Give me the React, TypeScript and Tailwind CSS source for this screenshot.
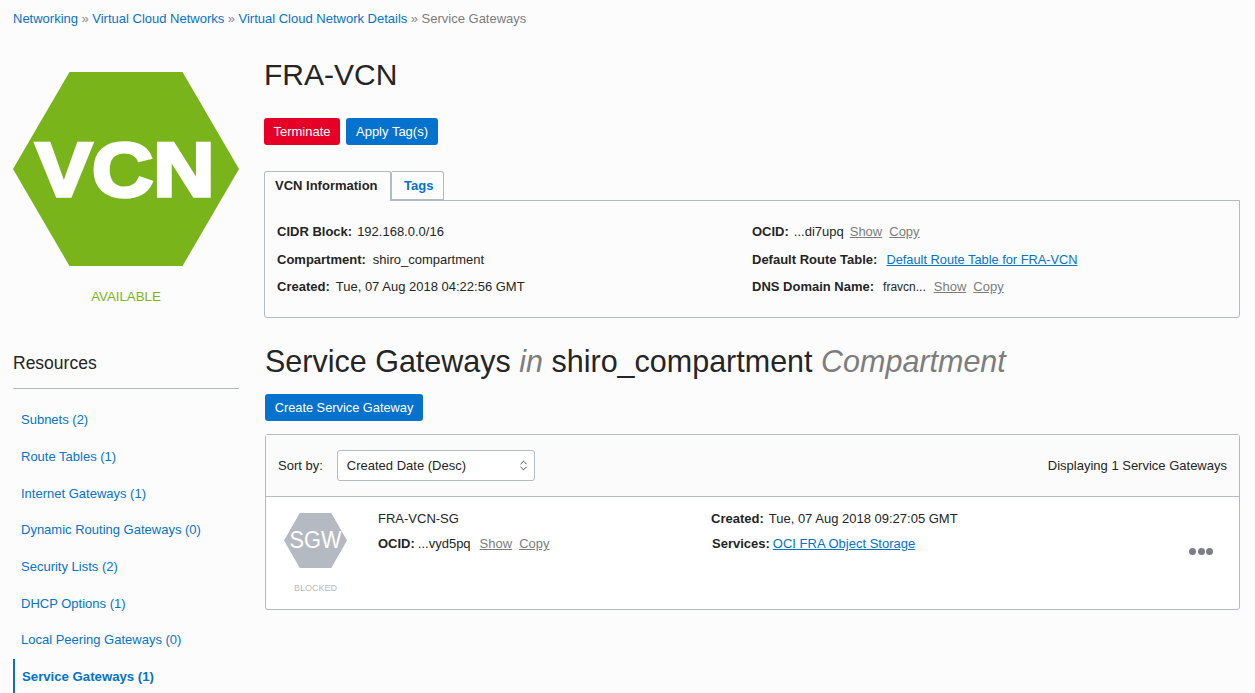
import { ChevronsUpDown } from "lucide-react";

const resources = [
  "Subnets (2)",
  "Route Tables (1)",
  "Internet Gateways (1)",
  "Dynamic Routing Gateways (0)",
  "Security Lists (2)",
  "DHCP Options (1)",
  "Local Peering Gateways (0)",
];

function Crumb({ children }: { children: React.ReactNode }) {
  return <a className="text-[#0572ce]">{children}</a>;
}

function Sep() {
  return <span className="px-[3.5px] text-[#8a8a8a]">»</span>;
}

function Hexagon({
  text,
  w,
  h,
  fill,
  size,
  x,
  y,
  tl,
  heavy,
}: {
  text: string;
  w: number;
  h: number;
  fill: string;
  size: number;
  x: number;
  y: number;
  tl: number;
  heavy?: boolean;
}) {
  return (
    <svg width={w} height={h} viewBox={`0 0 ${w} ${h}`} className="block">
      <polygon points={`${w / 4},0 ${(w * 3) / 4},0 ${w},${h / 2} ${(w * 3) / 4},${h} ${w / 4},${h} 0,${h / 2}`} fill={fill} />
      <text
        x={x}
        y={y}
        textAnchor="middle"
        fill="#fff"
        fontSize={size}
        fontWeight={heavy ? "bold" : "normal"}
        stroke={heavy ? "#fff" : "none"}
        strokeWidth={heavy ? 3.5 : 0}
        textLength={tl}
        lengthAdjust="spacingAndGlyphs"
      >
        {text}
      </text>
    </svg>
  );
}

function Actions({ gap }: { gap: string }) {
  return (
    <>
      <a className={`${gap} text-[#7d7d7d] underline`}>Show</a>
      <a className="ml-[7px] text-[#7d7d7d] underline">Copy</a>
    </>
  );
}

export default function App() {
  return (
    <div className="h-[693px] w-[1255px] overflow-hidden bg-[#fcfcfc] font-['Liberation_Sans',Arial,sans-serif] text-[13px] leading-[18px] text-[#252525]">
      <div className="pl-[13px] pt-[10px]">
        <Crumb>Networking</Crumb>
        <Sep />
        <Crumb>Virtual Cloud Networks</Crumb>
        <Sep />
        <Crumb>Virtual Cloud Network Details</Crumb>
        <Sep />
        <span className="text-[#7d7d7d]">Service Gateways</span>
      </div>

      <div className="flex pl-[13px] pr-[15px] pt-[25px]">
        {/* left column */}
        <aside className="w-[226px] shrink-0">
          <div className="pt-[19px]">
            <Hexagon text="VCN" w={226} h={194} fill="#78b41a" size={76} x={112} y={123.5} tl={179} heavy />
          </div>
          <div className="mt-[22px] text-center text-[13.3px] leading-[18px] text-[#7cb518]">AVAILABLE</div>
          <h2 className="mt-[46px] border-b border-[#b5b9c1] pb-[14px] text-[17.5px] leading-[22px]">Resources</h2>
          <ul className="mt-[13px]">
            {resources.map((r) => (
              <li key={r} className="h-[36.7px] pl-[8px] pt-[9.15px] text-[#0572ce]">
                {r}
              </li>
            ))}
            <li className="h-[37px] border-l-2 border-[#0572ce] pl-[7px] pt-[9.35px] text-[13.2px] font-bold text-[#0572ce]">
              Service Gateways (1)
            </li>
          </ul>
        </aside>

        {/* main column */}
        <main className="ml-[25px] min-w-0 flex-1">
          <h1 className="pt-[4px] text-[30px] leading-[36px]">FRA-VCN</h1>
          <div className="mt-[25px] flex gap-[6px]">
            <button className="h-[27px] w-[76px] rounded-[3px] bg-[#e60026] text-[13px] text-white">Terminate</button>
            <button className="h-[27px] w-[92px] rounded-[3px] bg-[#0572ce] text-[13px] text-white">Apply Tag(s)</button>
          </div>

          <div className="relative z-10 mt-[26px] flex h-[30px] items-stretch">
            <div className="h-[30px] w-[128px] rounded-t-[3px] border border-r-2 border-b-0 border-[#b5b9c1] bg-[#fcfcfc] pl-[10px] pt-[5px] text-[13px] font-bold">
              VCN Information
            </div>
            <div className="h-[29px] w-[52px] rounded-tr-[3px] border border-l-0 border-[#b5b9c1] pl-[12px] pt-[5px] font-bold text-[#0572ce]">
              Tags
            </div>
          </div>
          <div className="-mt-px grid h-[118px] grid-cols-[475px_1fr] rounded-b-[3px] border border-[#b5b9c1] pl-[12px] pt-[22px]">
            <div className="flex flex-col gap-[9.5px]">
              <div>
                <b>CIDR Block:</b>
                <span className="ml-[5px]">192.168.0.0/16</span>
              </div>
              <div>
                <b>Compartment:</b>
                <span className="ml-[7px]">shiro_compartment</span>
              </div>
              <div>
                <b>Created:</b>
                <span className="ml-[6px]">Tue, 07 Aug 2018 04:22:56 GMT</span>
              </div>
            </div>
            <div className="flex flex-col gap-[9.5px]">
              <div>
                <b>OCID:</b>
                <span className="ml-[5px]">...di7upq</span>
                <Actions gap="ml-[6px]" />
              </div>
              <div>
                <b>Default Route Table:</b>
                <a className="ml-[9px] text-[12.8px] text-[#0572ce] underline">Default Route Table for FRA-VCN</a>
              </div>
              <div>
                <b>DNS Domain Name:</b>
                <span className="ml-[9px] text-[12px]">fravcn...</span>
                <Actions gap="ml-[8px]" />
              </div>
            </div>
          </div>

          <div className="ml-px">
            <h2 className="mt-[24px] text-[30.5px] leading-[38px]">
              Service Gateways <i className="text-[#7d7d7d]">in</i> shiro_compartment{" "}
              <i className="text-[#7d7d7d]">Compartment</i>
            </h2>
            <button className="mt-[14px] block h-[27px] w-[158px] rounded-[3px] bg-[#0572ce] text-[12.8px] text-white">
              Create Service Gateway
            </button>

            <section className="mt-[13px] h-[176px] rounded-[3px] border border-[#b5b9c1] bg-white">
              <div className="flex h-[62px] items-center justify-between border-b border-[#b5b9c1] bg-[#fbfbfc] pl-[12px] pr-[12px]">
                <div className="flex items-center">
                  <span>Sort by:</span>
                  <div className="ml-[14px] flex h-[31px] w-[198px] items-center justify-between rounded-[3px] border border-[#b5b9c1] bg-white pl-[9px] pr-[4px]">
                    <span className="pt-px">Created Date (Desc)</span>
                    <ChevronsUpDown size={13} strokeWidth={1.5} />
                  </div>
                </div>
                <span>Displaying 1 Service Gateways</span>
              </div>
              <div className="flex pl-[18px] pt-[16px]">
                <div className="w-[63px] shrink-0">
                  <Hexagon text="SGW" w={63} h={55} fill="#b5b9c1" size={23} x={31.5} y={35} tl={52} />
                  <div className="mt-[14px] text-center text-[9px] leading-[12px] text-[#b5b9c1]">BLOCKED</div>
                </div>
                <div className="ml-[31px] w-[333px] shrink-0">
                  <div className="-mt-[3px]">FRA-VCN-SG</div>
                  <div className="mt-[7px]">
                    <b>OCID:</b>
                    <span className="ml-[3px]">...vyd5pq</span>
                    <Actions gap="ml-[9px]" />
                  </div>
                </div>
                <div className="-mt-[3px] flex-1">
                  <div className="mb-[7px]">
                    <b>Created:</b>
                    <span className="ml-[5px]">Tue, 07 Aug 2018 09:27:05 GMT</span>
                  </div>
                  <div className="pl-[1px]">
                    <b>Services:</b>
                    <a className="ml-[3px] text-[#0572ce] underline">OCI FRA Object Storage</a>
                  </div>
                </div>
                <div className="mr-[26px] mt-[35px] flex h-[8px] gap-[1.5px]">
                  <span className="size-[7px] rounded-full bg-[#7d7d85]" />
                  <span className="size-[7px] rounded-full bg-[#7d7d85]" />
                  <span className="size-[7px] rounded-full bg-[#7d7d85]" />
                </div>
              </div>
            </section>
          </div>
        </main>
      </div>
    </div>
  );
}
